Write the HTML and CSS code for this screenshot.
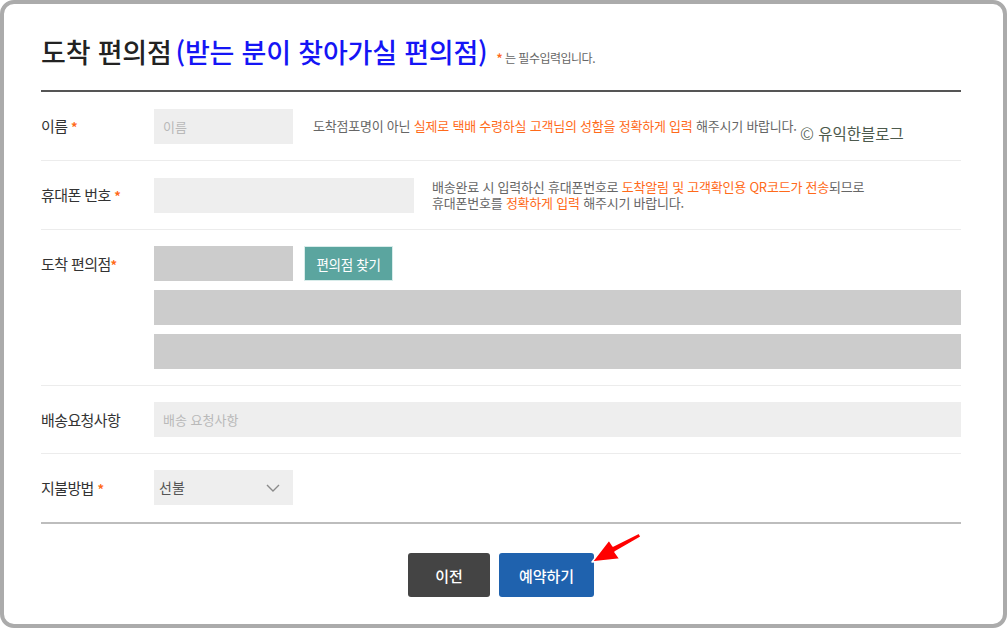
FILE: index.html
```html
<!DOCTYPE html>
<html lang="ko">
<head>
<meta charset="utf-8">
<title>도착 편의점</title>
<link rel="stylesheet" href="styles.css">
</head>
<body>
<div class="card">
  <div class="header">
    <h1 class="title">도착 편의점<span class="title-blue">(받는 분이 찾아가실 편의점)</span></h1>
    <span class="req-note"><span class="star">*</span> 는 필수입력입니다.</span>
  </div>

  <div class="row">
    <div class="label">이름 <span class="star">*</span></div>
    <div class="field field-inline">
      <div class="input w139 placeholder">이름</div>
      <p class="help help-one">도착점포명이 아닌 <em>실제로 택배 수령하실 고객님의 성함을 정확하게 입력</em> 해주시기 바랍니다.</p>
      <span class="watermark"><span class="copy">©</span> 유익한블로그</span>
    </div>
  </div>

  <div class="row">
    <div class="label">휴대폰 번호 <span class="star">*</span></div>
    <div class="field field-inline">
      <div class="input w260"></div>
      <div class="help help-two">
        <p class="help-line">배송완료 시 입력하신 휴대폰번호로 <em>도착알림 및 고객확인용 QR코드가 전송</em>되므로</p>
        <p class="help-line">휴대폰번호를 <em>정확하게 입력</em> 해주시기 바랍니다.</p>
      </div>
    </div>
  </div>

  <div class="row">
    <div class="label">도착 편의점<span class="star">*</span></div>
    <div class="field field-stack">
      <div class="store-line">
        <div class="input gray w139"></div>
        <button class="btn-find" type="button">편의점 찾기</button>
      </div>
      <div class="input gray full"></div>
      <div class="input gray full"></div>
    </div>
  </div>

  <div class="row">
    <div class="label">배송요청사항</div>
    <div class="field">
      <div class="input full placeholder">배송 요청사항</div>
    </div>
  </div>

  <div class="row row-last">
    <div class="label">지불방법 <span class="star">*</span></div>
    <div class="field">
      <div class="input w139 select">
        <span>선불</span>
        <svg class="chev" width="14" height="8" viewBox="0 0 14 8"><path d="M1 1 L7 7 L13 1" fill="none" stroke="#8a8a8a" stroke-width="1.4"/></svg>
      </div>
    </div>
  </div>

  <div class="actions">
    <button class="btn btn-prev" type="button">이전</button>
    <button class="btn btn-submit" type="button">예약하기</button>
  </div>

  <svg class="arrow" width="60" height="40" viewBox="0 0 60 40">
    <path d="M50 1 L24 14 L20 8 L3 30 L31 27 L26 20 L52 5 Z" fill="#ff0000" stroke="#ffffff" stroke-width="1.5" stroke-linejoin="round"/>
  </svg>
</div>
</body>
</html>
```

FILE: styles.css
```css
* { box-sizing: border-box; }
html, body { margin: 0; padding: 0; background: #ffffff; }
body {
  font-family: "Noto Sans CJK KR", "Noto Sans", sans-serif;
  color: #333;
}
.card {
  position: relative;
  width: 1007px;
  height: 628px;
  border: 4px solid #ababab;
  border-radius: 14px;
  padding: 0 42px 0 37px;
  background: #fff;
}
.header {
  height: 88px;
  padding-top: 30px;
  border-bottom: 2px solid #555;
  display: flex;
  align-items: baseline;
}
.title {
  margin: 0;
  font-size: 27px;
  font-weight: 500;
  letter-spacing: -0.2px;
  line-height: 36px;
  color: #222;
}
.title-blue { color: #1515f5; margin-left: 4px; }
.req-note {
  margin-left: 9px;
  font-size: 12px;
  color: #666;
  letter-spacing: -0.5px;
}
.star { color: #ff6a1a; font-weight: 700; }
.row {
  display: flex;
  padding: 16px 0;
  border-bottom: 1px solid #ececec;
}
.row-last { border-bottom: 2px solid #bdbdbd; padding-bottom: 16px; }
.label {
  width: 113px;
  flex: none;
  font-size: 15px;
  letter-spacing: -0.6px;
  line-height: 35px;
  color: #333;
}
.label .star { font-size: 13px; }
.field { flex: 1; position: relative; }
.field-inline { display: flex; align-items: center; }
.field-stack { display: flex; flex-direction: column; gap: 9px; }
.store-line { display: flex; gap: 11px; }
.input {
  height: 35px;
  background: #eeeeee;
  font-size: 13px;
  line-height: 35px;
  padding: 0 9px;
  flex: none;
}
.input.gray { background: #cccccc; }
.w139 { width: 139px; }
.w260 { width: 260px; }
.full { width: 100%; }
.placeholder { color: #b9b9b9; }
.help {
  margin: 0;
  font-size: 13px;
  color: #666;
  letter-spacing: -0.22px;
  white-space: nowrap;
}
.help em {
  font-style: normal;
  color: #ff6a1a;
  display: inline-block;
  line-height: 16px;
}
.help-one { margin-left: 20px; line-height: 16px; }
.help-two { margin-left: 18px; display: flex; flex-direction: column; }
.help-line { margin: 0; height: 16px; line-height: 16px; }
.watermark {
  position: absolute;
  left: 646px;
  top: 12px;
  font-size: 15.5px;
  color: #4d5a4d;
  white-space: nowrap;
}
.copy { font-size: 17px; font-weight: 300; }
.btn-find {
  height: 35px;
  width: 89px;
  border: 1px solid #d8ecea;
  background: #5ba59f;
  color: #fff;
  font-family: inherit;
  font-size: 13.5px;
  letter-spacing: -0.3px;
  padding: 0;
}
.select {
  display: flex;
  align-items: center;
  justify-content: space-between;
  padding: 0 13px 0 5px;
  color: #555;
  font-size: 14px;
}
.actions {
  display: flex;
  justify-content: center;
  gap: 9px;
  padding-top: 29px;
}
.btn {
  height: 44px;
  border: none;
  border-radius: 3px;
  color: #fff;
  font-family: inherit;
  font-size: 15px;
  font-weight: 500;
  padding: 0;
}
.btn-prev { width: 82px; background: #444444; }
.btn-submit { width: 95px; background: #1f62ae; }
.arrow {
  position: absolute;
  left: 585px;
  top: 528px;
}
```
